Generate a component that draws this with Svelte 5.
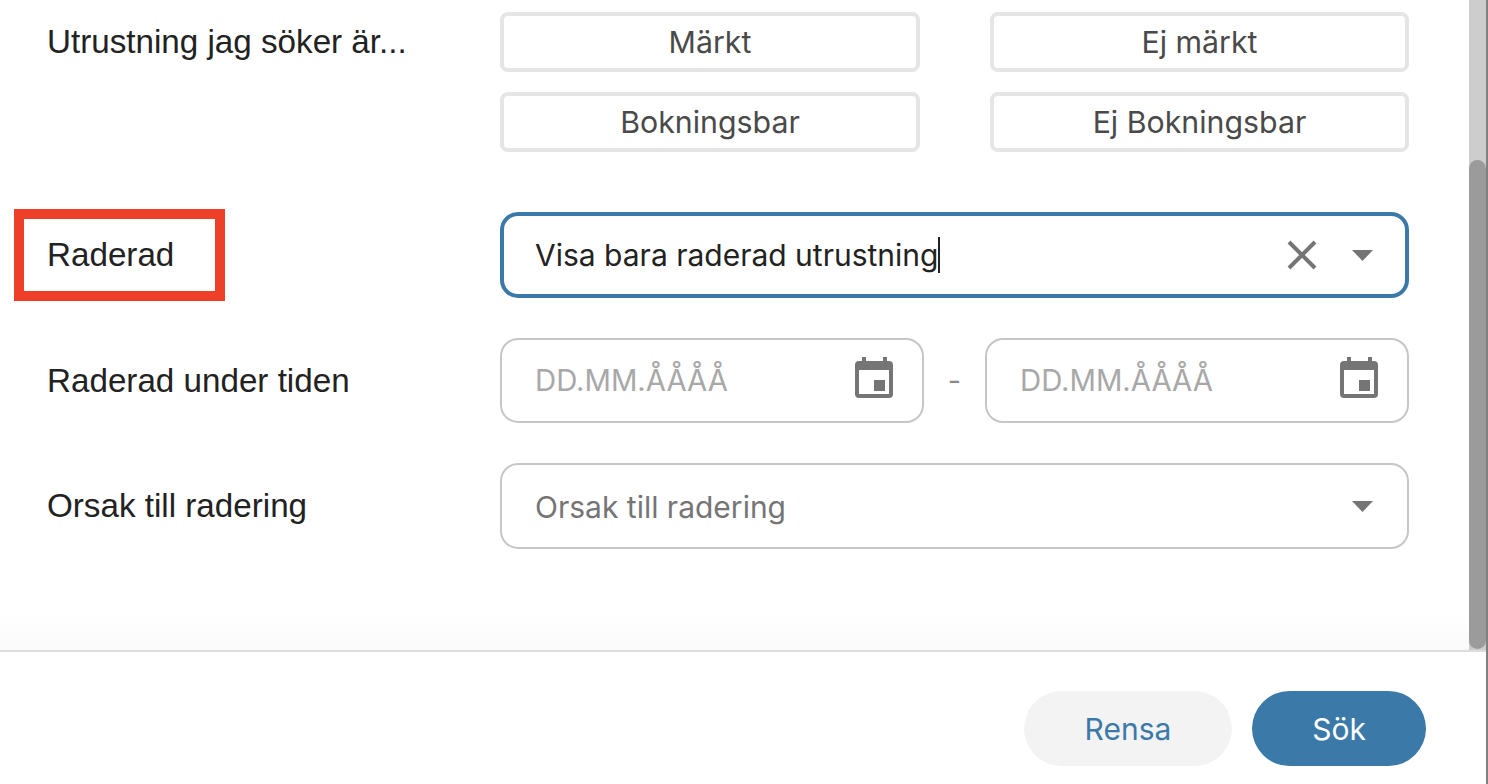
<script lang="ts">
  const kinds = ['Märkt', 'Ej märkt', 'Bokningsbar', 'Ej Bokningsbar'];
</script>

{#snippet caret()}
  <svg class="caret" width="21" height="11" viewBox="0 0 21 11"><path d="M0 0h21L10.5 11z" /></svg>
{/snippet}

{#snippet dateField()}
  <div class="field date">
    <span class="placeholder">DD.MM.ÅÅÅÅ</span>
    <svg class="cal" width="38" height="41" viewBox="0 0 38 41">
      <path fill-rule="evenodd" d="M7 0h4v4h17V0h4v4h2a4 4 0 0 1 4 4v29a4 4 0 0 1-4 4H4a4 4 0 0 1-4-4V8a4 4 0 0 1 4-4h3zM4 13v24h30V13z" />
      <rect x="19" y="23" width="11" height="11" />
    </svg>
  </div>
{/snippet}

<div class="dialog">
  <div class="body">
    <div class="content">
      <div class="row first">
        <div class="label">Utrustning jag söker är...</div>
        <div class="kinds">
          {#each kinds as kind}
            <button class="kind">{kind}</button>
          {/each}
        </div>
      </div>

      <div class="row deleted">
        <div class="label marked">Raderad</div>
        <div class="field focused">
          <span class="value">Visa bara raderad utrustning</span><span class="cursor"></span>
          <span class="spacer"></span>
          <svg class="clear" width="30" height="30" viewBox="0 0 30 30"><path d="M2 2l26 26M28 2L2 28" /></svg>
          {@render caret()}
        </div>
      </div>

      <div class="row dates">
        <div class="label">Raderad under tiden</div>
        <div class="range">
          {@render dateField()}
          <span class="dash">-</span>
          {@render dateField()}
        </div>
      </div>

      <div class="row reason">
        <div class="label">Orsak till radering</div>
        <div class="field">
          <span class="muted">Orsak till radering</span>
          <span class="spacer"></span>
          {@render caret()}
        </div>
      </div>
    </div>
    <div class="scrollbar"><div class="thumb"></div></div>
  </div>

  <div class="footer">
    <button class="btn clear-btn">Rensa</button>
    <button class="btn search">Sök</button>
  </div>
</div>

<style>
  :global(body) {
    margin: 0;
    background: #fff;
  }

  .dialog {
    width: 1488px;
    height: 784px;
    box-sizing: border-box;
    border-right: 2px solid #808080;
    display: flex;
    flex-direction: column;
    overflow: hidden;
    font-family: Inter, "Liberation Sans", sans-serif;
  }

  .body {
    height: 650px;
    flex: none;
    display: flex;
  }

  .content {
    flex: 1;
    padding: 12px 60px 0 47px;
    background: linear-gradient(to bottom, #fff 0, #fff 615px, #fafafa 650px);
  }

  .scrollbar {
    width: 17px;
    background: #cdcdcd;
    padding-top: 160px;
    box-sizing: border-box;
  }

  .thumb {
    height: 489px;
    background: #9b9b9b;
    border-radius: 9px;
  }

  .row {
    display: grid;
    grid-template-columns: 453px 909px;
    align-items: center;
  }

  .label {
    font-family: "Liberation Sans", Arial, sans-serif;
    font-size: 33.2px;
    color: #222;
  }

  .first {
    align-items: start;
  }

  .first .label {
    padding-top: 11px;
  }

  .kinds {
    display: grid;
    grid-template-columns: 420px 419px;
    justify-content: space-between;
    row-gap: 20px;
  }

  .kind {
    height: 60px;
    box-sizing: border-box;
    border: 4px solid #e5e5e5;
    border-radius: 8px;
    background: #fff;
    color: #4a4a4a;
    font-family: inherit;
    font-size: 30.3px;
    padding: 0;
  }

  .deleted {
    margin-top: 60px;
  }

  .marked {
    position: relative;
  }

  .marked::after {
    content: '';
    position: absolute;
    left: -33px;
    top: 50%;
    margin-top: -46px;
    width: 211px;
    height: 92px;
    box-sizing: border-box;
    border: 10px solid #ee4028;
  }

  .field {
    height: 86px;
    box-sizing: border-box;
    display: flex;
    align-items: center;
    padding: 0 34px 0 33px;
    border: 2px solid #c6c6c6;
    border-radius: 18px;
    font-size: 30px;
  }

  .focused {
    border: 4px solid #3b79a8;
    padding: 0 32px 0 31px;
    color: #222;
  }

  .cursor {
    width: 2px;
    height: 36px;
    background: #222;
    margin-left: 0;
  }

  .spacer {
    flex: 1;
  }

  .clear {
    fill: none;
    stroke: #757575;
    stroke-width: 4px;
    margin-right: 35px;
  }

  .caret {
    fill: #757575;
  }

  .dates {
    margin-top: 40px;
  }

  .range {
    display: grid;
    grid-template-columns: 424px 1fr 424px;
    align-items: center;
  }

  .date {
    height: 85px;
    justify-content: space-between;
    padding-right: 29px;
    font-size: 29.3px;
  }

  .placeholder {
    color: #a8a8a8;
  }

  .cal {
    fill: #757575;
    margin-bottom: 6px;
  }

  .dash {
    color: #8a8a8a;
    font-size: 29px;
    text-align: center;
  }

  .reason {
    margin-top: 40px;
  }

  .muted {
    color: #757575;
    padding-top: 2px;
  }

  .footer {
    flex: 1;
    border-top: 2px solid #dcdcdc;
    display: flex;
    justify-content: flex-end;
    gap: 20px;
    padding: 39px 60px 0 0;
    align-items: flex-start;
  }

  .btn {
    height: 75px;
    border: none;
    border-radius: 38px;
    font-family: inherit;
    font-size: 30px;
    padding: 0;
  }

  .clear-btn {
    width: 208px;
    background: #f3f3f3;
    color: #3b79a8;
  }

  .search {
    width: 174px;
    background: #3b79a8;
    color: #fff;
  }
</style>
